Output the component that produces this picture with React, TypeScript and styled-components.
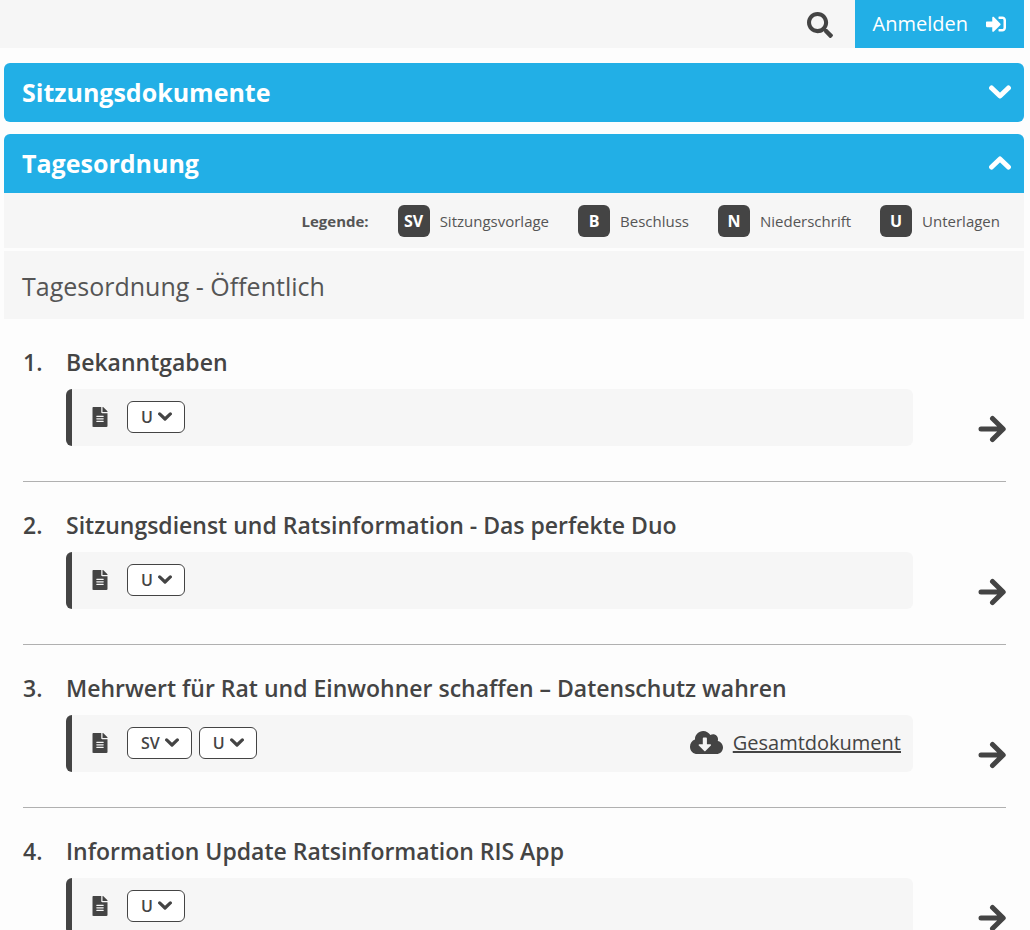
import React from "react";
import styled, { createGlobalStyle } from "styled-components";
import { FaCloudDownloadAlt, FaFileAlt, FaSearch, FaSignInAlt } from "react-icons/fa";

const color = {
  blue: "#22afe6",
  dark: "#444444",
  text: "#555555",
  grey: "#f6f6f6",
  line: "#b0b0b0",
};

const GlobalStyle = createGlobalStyle`
  *, *::before, *::after { box-sizing: border-box; }
  body {
    margin: 0;
    background: #fdfdfd;
    color: ${color.dark};
    font-family: "Open Sans", "Noto Sans", sans-serif;
  }
  h1, h2, h3, ol, ul { margin: 0; padding: 0; }
  button { font-family: inherit; cursor: pointer; }
  svg { display: block; flex: none; }
`;

const TopBar = styled.header`
  display: flex;
  justify-content: flex-end;
  height: 48px;
  margin-right: 6px;
  background: ${color.grey};
`;

const SearchButton = styled.button`
  display: flex;
  align-items: center;
  padding: 2px 22px 0;
  border: 0;
  background: none;
  color: ${color.dark};
`;

const LoginButton = styled.button`
  display: flex;
  align-items: center;
  gap: 18px;
  padding: 0 18px;
  border: 0;
  background: ${color.blue};
  color: #fff;
  font-size: 20px;
  line-height: 28px;
`;

const Main = styled.main`
  display: flex;
  flex-direction: column;
  gap: 12px;
  padding: 15px 6px 0 4px;
`;

const PanelTitle = styled.h2`
  font-size: 25px;
  line-height: 32px;
`;

const PanelToggle = styled.button<{ $open?: boolean }>`
  display: flex;
  align-items: center;
  justify-content: space-between;
  width: 100%;
  height: 59px;
  padding: 0 13px 2px 18px;
  border: 0;
  border-radius: ${(p) => (p.$open ? "6px 6px 0 0" : "6px")};
  background: ${color.blue};
  color: #fff;
  font: inherit;
`;

const Legend = styled.div`
  display: flex;
  align-items: center;
  justify-content: flex-end;
  gap: 29px;
  height: 55px;
  padding: 0 24px 0 18px;
  background: ${color.grey};
  color: ${color.text};
  font-size: 15px;
  line-height: 20px;
`;

const LegendEntry = styled.span`
  display: flex;
  align-items: center;
  gap: 10px;
`;

const Badge = styled.b`
  display: grid;
  place-items: center;
  width: 32px;
  height: 32px;
  border-radius: 6px;
  background: ${color.dark};
  color: #fff;
  font-size: 16px;
`;

const SectionTitle = styled.h3`
  margin-top: 3px;
  padding: 19px 18px 17px;
  background: ${color.grey};
  color: ${color.text};
  font-size: 25px;
  font-weight: 400;
  line-height: 32px;
`;

const AgendaList = styled.ol`
  padding: 0 18px 0 19px;
  list-style: none;
`;

const AgendaItem = styled.li`
  display: grid;
  grid-template-columns: 43px 1fr 93px;
  row-gap: 13px;
  padding: 29px 0 35px;
  border-bottom: 1px solid ${color.line};
`;

const ItemTitle = styled.span`
  font-size: 23px;
  font-weight: 600;
  line-height: 28px;
`;

const DocumentBar = styled.div`
  display: flex;
  grid-column: 2;
  align-items: center;
  height: 57px;
  padding: 0 12px 2px 18px;
  border-left: 6px solid ${color.dark};
  border-radius: 6px;
  background: ${color.grey};
`;

const DocumentButtons = styled.div`
  display: flex;
  flex: 1;
  gap: 7px;
  margin-left: 17px;
`;

const DocumentButton = styled.button`
  display: flex;
  align-items: center;
  gap: 5px;
  height: 32px;
  padding: 0 12px 0 13px;
  border: 1px solid ${color.dark};
  border-radius: 6px;
  background: #fff;
  color: ${color.dark};
  font-size: 16px;
  font-weight: 600;
`;

const DownloadLink = styled.a`
  display: flex;
  align-items: center;
  gap: 10px;
  color: ${color.dark};
  font-size: 20px;
  line-height: 28px;
`;

const DetailLink = styled.a`
  display: flex;
  align-items: center;
  align-self: end;
  justify-content: flex-end;
  height: 34px;
  color: ${color.dark};
`;

const Stroke = styled.svg`
  fill: none;
  stroke: currentColor;
  stroke-width: 5;
  stroke-linecap: round;
  stroke-linejoin: round;
`;

function Chevron({ width, up }: { width: number; up?: boolean }) {
  return (
    <Stroke width={width} viewBox="0 0 22 14" aria-hidden>
      <path d={up ? "M2.6 11 11 3 19.4 11" : "M2.6 3 11 11 19.4 3"} />
    </Stroke>
  );
}

function Arrow() {
  return (
    <Stroke width={28} viewBox="0 0 28 28" aria-hidden>
      <path d="M3 14H24M14.5 3.5 25.2 14 14.5 24.5" />
    </Stroke>
  );
}

const legend = [
  ["SV", "Sitzungsvorlage"],
  ["B", "Beschluss"],
  ["N", "Niederschrift"],
  ["U", "Unterlagen"],
];

const agenda = [
  { title: "Bekanntgaben", documents: ["U"] },
  { title: "Sitzungsdienst und Ratsinformation - Das perfekte Duo", documents: ["U"] },
  {
    title: "Mehrwert für Rat und Einwohner schaffen – Datenschutz wahren",
    documents: ["SV", "U"],
    complete: true,
  },
  { title: "Information Update Ratsinformation RIS App", documents: ["U"] },
];

export default function App() {
  return (
    <>
      <GlobalStyle />
      <TopBar>
        <SearchButton aria-label="Suche">
          <FaSearch size={26} />
        </SearchButton>
        <LoginButton>
          Anmelden
          <FaSignInAlt size={20} />
        </LoginButton>
      </TopBar>
      <Main>
        <PanelToggle aria-expanded={false}>
          <PanelTitle>Sitzungsdokumente</PanelTitle>
          <Chevron width={22} />
        </PanelToggle>
        <section>
          <PanelToggle $open aria-expanded>
            <PanelTitle>Tagesordnung</PanelTitle>
            <Chevron width={22} up />
          </PanelToggle>
          <Legend>
            <b>Legende:</b>
            {legend.map(([code, name]) => (
              <LegendEntry key={code}>
                <Badge>{code}</Badge>
                {name}
              </LegendEntry>
            ))}
          </Legend>
          <SectionTitle>Tagesordnung - Öffentlich</SectionTitle>
          <AgendaList>
            {agenda.map((item, index) => (
              <AgendaItem key={item.title}>
                <ItemTitle>{index + 1}.</ItemTitle>
                <ItemTitle as="h3">{item.title}</ItemTitle>
                <DocumentBar>
                  <FaFileAlt size={20} />
                  <DocumentButtons>
                    {item.documents.map((code) => (
                      <DocumentButton key={code} aria-haspopup="menu">
                        {code}
                        <Chevron width={14} />
                      </DocumentButton>
                    ))}
                  </DocumentButtons>
                  {item.complete && (
                    <DownloadLink href="#gesamtdokument">
                      <FaCloudDownloadAlt size={33} />
                      Gesamtdokument
                    </DownloadLink>
                  )}
                </DocumentBar>
                <DetailLink href={`#top-${index + 1}`} aria-label={item.title}>
                  <Arrow />
                </DetailLink>
              </AgendaItem>
            ))}
          </AgendaList>
        </section>
      </Main>
    </>
  );
}
